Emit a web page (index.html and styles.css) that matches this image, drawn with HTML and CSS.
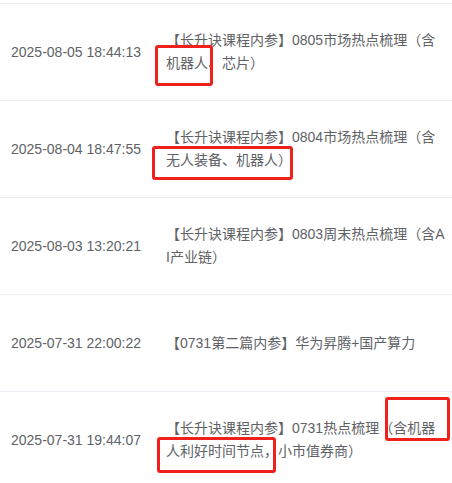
FILE: index.html
```html
<!DOCTYPE html>
<html lang="zh-CN">
<head>
    <meta charset="UTF-8">
    <title>内参列表</title>
    <link rel="stylesheet" href="styles.css">
</head>
<body>
    <div class="list">
        <div class="row">
            <div class="cell date">2025-08-05 18:44:13</div>
            <div class="cell title">【长升诀课程内参】0805市场热点梳理（含机器人、芯片）</div>
        </div>
        <div class="row">
            <div class="cell date">2025-08-04 18:47:55</div>
            <div class="cell title">【长升诀课程内参】0804市场热点梳理（含无人装备、机器人）</div>
        </div>
        <div class="row">
            <div class="cell date">2025-08-03 13:20:21</div>
            <div class="cell title">【长升诀课程内参】0803周末热点梳理（含AI产业链）</div>
        </div>
        <div class="row">
            <div class="cell date">2025-07-31 22:00:22</div>
            <div class="cell title">【0731第二篇内参】华为昇腾+国产算力</div>
        </div>
        <div class="row">
            <div class="cell date">2025-07-31 19:44:07</div>
            <div class="cell title">【长升诀课程内参】0731热点梳理（含机器人利好时间节点，小市值券商）</div>
        </div>

        <!-- highlight marks drawn over the text -->
        <span class="mark mark-1"></span>
        <span class="mark mark-2"></span>
        <span class="mark mark-3"></span>
        <span class="mark mark-4"></span>
    </div>
</body>
</html>
```

FILE: styles.css
```css
* {
    margin: 0;
    padding: 0;
    box-sizing: border-box;
}

body {
    font-family: 'Liberation Sans', 'Noto Sans CJK SC', sans-serif;
    font-size: 14px;
    color: #606266;
    background: #fff;
    overflow: hidden;
}

.list {
    position: relative;
    padding-top: 3px;
}

.row {
    display: grid;
    grid-template-columns: 156px 290px;
    align-items: center;
    height: 97px;
    border-top: 1px solid #ebeef5;
}

.cell {
    line-height: 23px;
}

.date {
    padding-left: 11px;
    white-space: nowrap;
}

.title {
    padding-left: 10px;
    word-break: break-all;
}

.mark {
    position: absolute;
    border: 3px solid #f0211c;
    border-radius: 3px;
}

.mark-1 { left: 155px; top: 45px; width: 58px; height: 41px; }
.mark-2 { left: 152px; top: 146px; width: 141px; height: 34px; }
.mark-3 { left: 385px; top: 397px; width: 65px; height: 44px; }
.mark-4 { left: 157px; top: 437px; width: 119px; height: 36px; }
```
